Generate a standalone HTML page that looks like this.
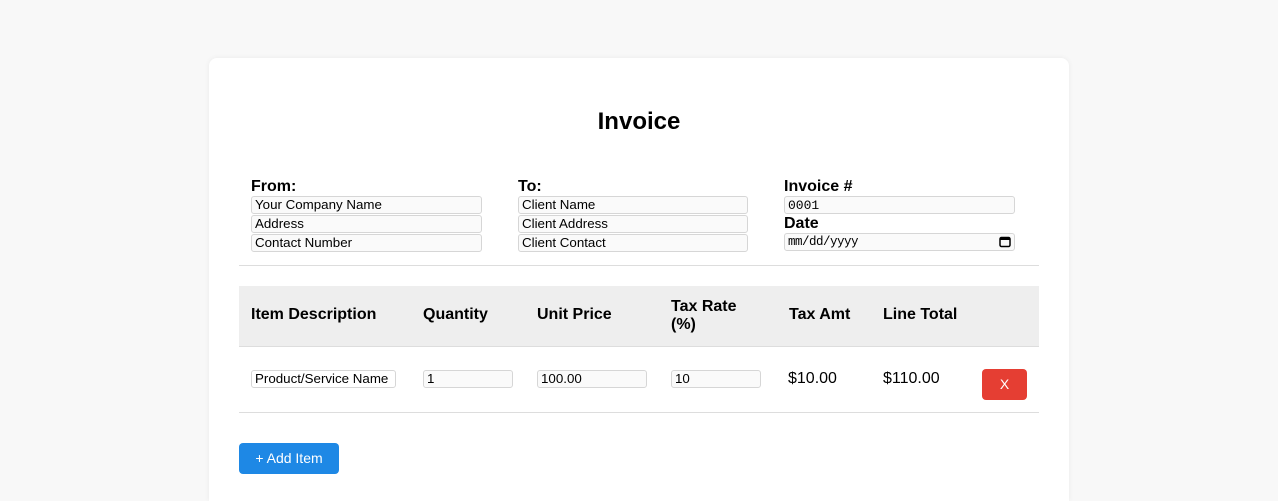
<!DOCTYPE html>
<html style="width:1278px;height:501px;overflow:hidden"><head><meta charset="utf-8"><style>
*{box-sizing:border-box;margin:0;padding:0}
body{width:1278px;height:501px;background:#f8f8f8;font-family:"Liberation Sans",Arial,sans-serif;color:#000;position:relative;overflow:hidden}
.card{position:absolute;left:209px;top:58px;width:860px;height:443px;background:#fff;border-radius:8px 8px 0 0;box-shadow:0 0 6px rgba(0,0,0,.06)}
.a{position:absolute}
.t{position:absolute;font-size:24px;font-weight:bold;left:0;width:1278px;text-align:center;top:108px}
.lbl{position:absolute;font-size:16px;font-weight:bold;line-height:18px}
.in{position:absolute;height:18px;border:1px solid #d6d6d6;border-radius:3px;background:#fafafa;font-size:13.33px;line-height:16px;padding-left:3px;white-space:nowrap;overflow:hidden}
.th{position:absolute;font-size:16px;font-weight:bold;line-height:18px}
.td{position:absolute;font-size:16px;top:370px}
</style></head><body>
<div class="card"></div>
<div class="t">Invoice</div>

<div class="lbl" style="left:251px;top:178px">From:</div>
<div class="in" style="left:251px;top:196px;width:231px">Your Company Name</div>
<div class="in" style="left:251px;top:215px;width:231px">Address</div>
<div class="in" style="left:251px;top:234px;width:231px">Contact Number</div>

<div class="lbl" style="left:518px;top:178px">To:</div>
<div class="in" style="left:518px;top:196px;width:230px">Client Name</div>
<div class="in" style="left:518px;top:215px;width:230px">Client Address</div>
<div class="in" style="left:518px;top:234px;width:230px">Client Contact</div>

<div class="lbl" style="left:784px;top:178px">Invoice #</div>
<div class="in" style="left:784px;top:196px;width:231px;font-family:'Liberation Mono',monospace;font-size:13px;line-height:17px">0001</div>
<div class="lbl" style="left:784px;top:215px">Date</div>
<div class="in" style="left:784px;top:233px;width:231px;font-family:'Liberation Mono',monospace;font-size:12.5px;line-height:17px;letter-spacing:-0.5px">mm/dd/yyyy
<svg style="position:absolute;right:3px;top:2px" width="12" height="12" viewBox="0 0 12 12"><rect x="1" y="1.5" width="10" height="9" rx="1.5" fill="none" stroke="#000" stroke-width="1.5"/><rect x="1" y="1.5" width="10" height="2.5" fill="#000"/></svg></div>

<div class="a" style="left:239px;top:265px;width:800px;height:1px;background:#ddd"></div>

<div class="a" style="left:239px;top:286px;width:800px;height:61px;background:#eee;border-bottom:1px solid #ddd"></div>
<div class="th" style="left:251px;top:306px">Item Description</div>
<div class="th" style="left:423px;top:306px">Quantity</div>
<div class="th" style="left:537px;top:306px">Unit Price</div>
<div class="th" style="left:671px;top:298px">Tax Rate<br>(%)</div>
<div class="th" style="left:789px;top:306px">Tax Amt</div>
<div class="th" style="left:883px;top:306px">Line Total</div>

<div class="in" style="left:251px;top:370px;width:145px;background:#fff">Product/Service Name</div>
<div class="in" style="left:423px;top:370px;width:90px">1</div>
<div class="in" style="left:537px;top:370px;width:110px">100.00</div>
<div class="in" style="left:671px;top:370px;width:90px">10</div>
<div class="td" style="left:788px">$10.00</div>
<div class="td" style="left:883px">$110.00</div>
<div class="a" style="left:982px;top:369px;width:45px;height:31px;background:#e53e33;border-radius:4px;color:#fff;font-size:14px;text-align:center;line-height:31px">X</div>
<div class="a" style="left:239px;top:412px;width:800px;height:1px;background:#ddd"></div>

<div class="a" style="left:239px;top:443px;width:100px;height:31px;background:#1e88e5;border-radius:4px;color:#fff;font-size:14px;text-align:center;line-height:31px">+ Add Item</div>
</body></html>
